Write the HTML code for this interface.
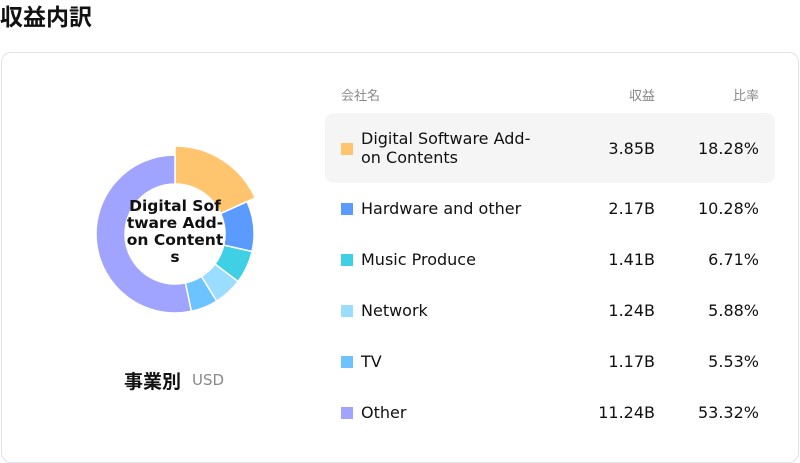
<!DOCTYPE html>
<html><head><meta charset="utf-8"><style>
body{margin:0;width:800px;height:463px;background:#fff;font-family:"DejaVu Sans","Liberation Sans","Noto Sans CJK JP",sans-serif;position:relative;overflow:hidden;color:#111}
.t{position:absolute;left:0;top:0px;font-size:23px;font-weight:bold;font-family:"Noto Sans CJK JP",sans-serif;line-height:30px}
.card{position:absolute;left:1px;top:52px;width:796px;height:409px;border:1px solid #e2e2ea;border-radius:10px}
.hl{position:absolute;left:325px;top:113px;width:450px;height:70px;background:#f5f5f5;border-radius:9px}
.h{position:absolute;top:86px;font-size:13px;color:#888;font-family:"Noto Sans CJK JP",sans-serif;line-height:18px}
.r{position:absolute;left:0;width:800px;font-size:16px;line-height:19px}
.r .sq{position:absolute;left:341px;width:12px;height:12px;top:-5px}
.r .n{position:absolute;left:361px;top:-9px;white-space:nowrap}
.r .v{position:absolute;right:145px;top:-9px}
.r .p{position:absolute;right:41px;top:-9px}
.lbl{position:absolute;left:124px;top:367px;font-size:19px;font-weight:bold;font-family:"Noto Sans CJK JP",sans-serif}
.usd{position:absolute;left:192px;top:371px;font-size:15px;color:#888}
.ct{position:absolute;left:100px;top:198px;width:150px;text-align:center;font-size:15.5px;font-weight:bold;line-height:17px;white-space:nowrap}
</style></head><body>
<div class="t">収益内訳</div>
<div class="card"></div>
<svg style="position:absolute;left:0;top:0" width="800" height="463">
<g stroke="#fff" stroke-width="1.5">
<path fill="#FFC46E" d="M175,146 A88 88 0 0 1 255.27,197.95 L220.61,213.52 A50 50 0 0 0 175,184 Z"/>
<path fill="#5B9BFF" d="M247.06,201.63 A79 79 0 0 1 252.03,251.53 L223.76,245.10 A50 50 0 0 0 220.61,213.52 Z"/>
<path fill="#40D0E6" d="M252.03,251.53 A79 79 0 0 1 238.11,281.51 L214.95,264.07 A50 50 0 0 0 223.76,245.10 Z"/>
<path fill="#9ADDFF" d="M238.11,281.51 A79 79 0 0 1 216.70,301.10 L201.39,276.47 A50 50 0 0 0 214.95,264.07 Z"/>
<path fill="#6CC3FF" d="M216.70,301.10 A79 79 0 0 1 191.36,311.29 L185.36,282.92 A50 50 0 0 0 201.39,276.47 Z"/>
<path fill="#A0A4FF" d="M191.36,311.29 A79 79 0 1 1 175,155 L175,184 A50 50 0 1 0 185.36,282.92 Z"/>
</g></svg>
<div class="ct">Digital Sof<br>tware Add-<br>on Content<br>s</div>
<div class="lbl">事業別</div><div class="usd">USD</div>
<div class="hl"></div>
<div class="h" style="left:341px">会社名</div>
<div class="h" style="right:145px">収益</div>
<div class="h" style="right:41px">比率</div>
<div class="r" style="top:148px"><div class="sq" style="background:#FFC46E"></div><div class="n" style="top:-19px">Digital Software Add-<br>on Contents</div><div class="v">3.85B</div><div class="p">18.28%</div></div>
<div class="r" style="top:208px"><div class="sq" style="background:#5B9BFF"></div><div class="n">Hardware and other</div><div class="v">2.17B</div><div class="p">10.28%</div></div>
<div class="r" style="top:259px"><div class="sq" style="background:#40D0E6"></div><div class="n">Music Produce</div><div class="v">1.41B</div><div class="p">6.71%</div></div>
<div class="r" style="top:310px"><div class="sq" style="background:#9ADDFF"></div><div class="n">Network</div><div class="v">1.24B</div><div class="p">5.88%</div></div>
<div class="r" style="top:361px"><div class="sq" style="background:#6CC3FF"></div><div class="n">TV</div><div class="v">1.17B</div><div class="p">5.53%</div></div>
<div class="r" style="top:412px"><div class="sq" style="background:#A0A4FF"></div><div class="n">Other</div><div class="v">11.24B</div><div class="p">53.32%</div></div>
</body></html>
